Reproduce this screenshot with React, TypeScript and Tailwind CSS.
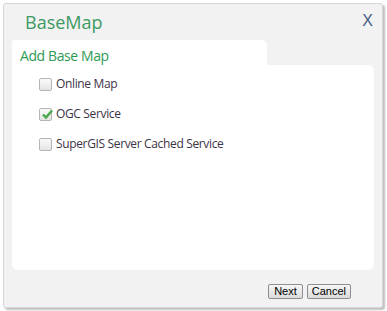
import { useState } from 'react';

const options = [
  { id: 'online', label: 'Online Map' },
  { id: 'ogc', label: 'OGC Service' },
  { id: 'supergis', label: 'SuperGIS Server Cached Service' },
];

function Check({ checked }: { checked: boolean }) {
  return (
    <span className="relative inline-block w-[13px] h-[13px] border border-[#b5b5b5] bg-gradient-to-b from-[#fafafa] to-[#e4e4e4] rounded-[2px]">
      {checked && (
        <svg viewBox="0 0 13 13" className="absolute left-[1px] top-[-1px] w-[13px] h-[13px]">
          <path d="M2 6.5 L5 9.5 L11 2.5" fill="none" stroke="#4aa84a" strokeWidth="2.4" />
        </svg>
      )}
    </span>
  );
}

export default function App() {
  const [selected, setSelected] = useState('ogc');

  return (
    <div className="w-[387px] h-[311px] bg-white pt-[3px] pl-[3px]">
      <div
        className="w-[380px] h-[305px] bg-[#f2f2f2] border border-[#d6d6d6] rounded-[3px] shadow-[2px_2px_2px_rgba(0,0,0,0.25)] flex flex-col px-[8px]"
        style={{ fontFamily: '"Open Sans", "Liberation Sans", sans-serif' }}
      >
        <div className="h-[36px] flex items-start justify-between">
          <span className="text-[18px] leading-none text-[#3c9a62] mt-[9px] ml-[13px]">BaseMap</span>
          <span className="text-[16px] leading-none text-[#4a5d86] mt-[9px] mr-[1px]" style={{ fontFamily: '"Liberation Sans", sans-serif' }}>X</span>
        </div>

        <div className="w-[255px] h-[25px] bg-white rounded-tl-[3px] rounded-tr-[6px] pl-[8px] pt-[3px]">
          <span className="text-[14px] leading-none tracking-[-0.4px] text-[#2f9a55]">Add Base Map</span>
        </div>

        <div className="h-[205px] bg-white rounded-tr-[6px] rounded-b-[6px] pl-[27px] pt-[12px] flex flex-col gap-[16px]">
          {options.map((opt) => (
            <label
              key={opt.id}
              className="flex items-center gap-[4px] h-[14px] cursor-pointer"
              onClick={() => setSelected(opt.id)}
            >
              <Check checked={selected === opt.id} />
              <span className="text-[12px] leading-none tracking-[-0.35px] text-[#3d3346]">{opt.label}</span>
            </label>
          ))}
        </div>

        <div
          className="flex justify-end gap-[4px] mt-[14px] pr-[23px]"
          style={{ fontFamily: '"Liberation Sans", sans-serif' }}
        >
          <button className="h-[15px] px-[5px] text-[11px] leading-none text-black border border-[#8e8e8e] bg-gradient-to-b from-[#f6f6f6] to-[#dcdcdc] rounded-[2px]">
            Next
          </button>
          <button className="h-[15px] px-[4px] text-[11px] leading-none text-black border border-[#8e8e8e] bg-gradient-to-b from-[#f6f6f6] to-[#dcdcdc] rounded-[2px]">
            Cancel
          </button>
        </div>
      </div>
    </div>
  );
}
